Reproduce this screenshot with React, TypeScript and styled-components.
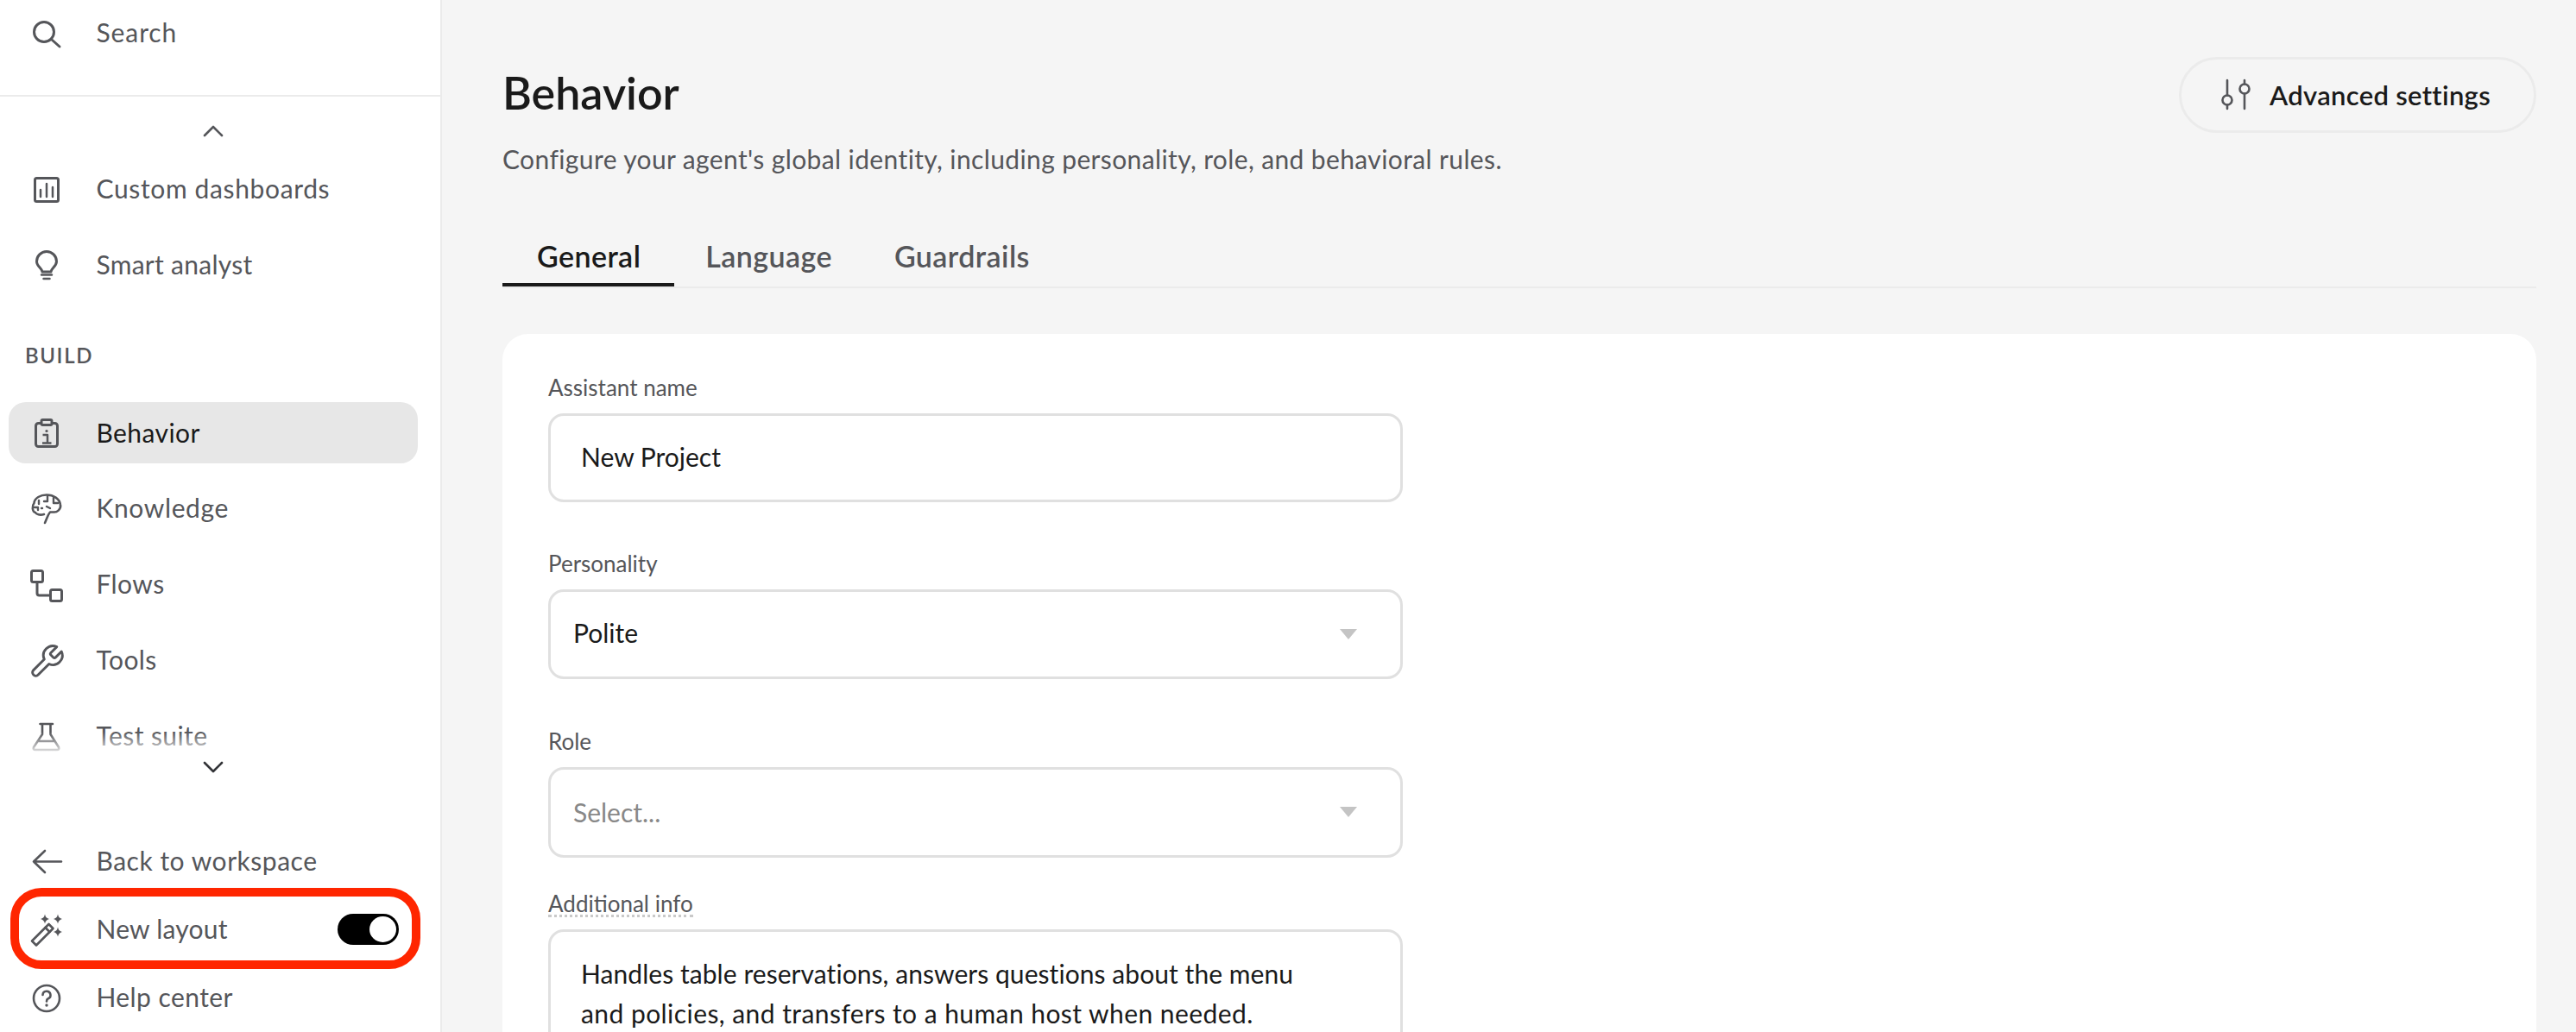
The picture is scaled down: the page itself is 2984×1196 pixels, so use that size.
import React from "react";
import styled, { createGlobalStyle } from "styled-components";

const FONT = `"Lato", "Liberation Sans", sans-serif`;
const INK = "#1a1a1a";
const MUTED = "#55565a";
const LINE = "#ebebeb";
const CANVAS = "#f5f5f5";

const Global = createGlobalStyle`
  html, body, #root { margin: 0; padding: 0; width: 100%; height: 100%; overflow: hidden; }
  body { font-family: ${FONT}; background: ${CANVAS}; }
  * { box-sizing: border-box; }
`;

const Page = styled.div`
  display: flex;
  width: 2984px;
  height: 1196px;
  overflow: hidden;
`;

const Sidebar = styled.aside`
  flex: none;
  width: 512px;
  height: 100%;
  display: flex;
  flex-direction: column;
  background: #fff;
  border-right: 2px solid ${LINE};
`;

const SearchArea = styled.div`
  flex: none;
  height: 112px;
  padding: 2.5px 26px 0 10px;
  border-bottom: 2px solid ${LINE};
`;

const NavArea = styled.nav`
  position: relative;
  flex: 1;
  min-height: 0;
  padding-right: 26px;
  padding-left: 10px;
`;

const Chevron = styled.div`
  height: 71.5px;
  padding-top: 9px;
  display: flex;
  align-items: center;
  justify-content: center;
  color: ${MUTED};
`;

const RowList = styled.div`
  display: flex;
  flex-direction: column;
  gap: 16.75px;
`;

const Row = styled.div<{ $active?: boolean }>`
  position: relative;
  height: 71px;
  display: flex;
  align-items: center;
  gap: 37.5px;
  padding-left: 24px;
  border-radius: 20px;
  font-size: 30px;
  white-space: nowrap;
  color: ${(p) => (p.$active ? INK : MUTED)};
  background: ${(p) => (p.$active ? "#e7e7e7" : "transparent")};
`;

const RowText = styled.span<{ $ls?: number }>`
  position: relative;
  top: -1px;
  letter-spacing: ${(p) => p.$ls ?? 0.42}px;
`;

const IconBox = styled.svg`
  flex: none;
  width: 40px;
  height: 40px;
  overflow: visible;
  fill: none;
  stroke: ${MUTED};
  stroke-width: 3;
  stroke-linecap: round;
  stroke-linejoin: round;
`;

const SectionLabel = styled.div`
  height: 30px;
  margin: 54.75px 0 39px 19px;
  line-height: 30px;
  font-size: 24px;
  font-weight: 600;
  letter-spacing: 1.6px;
  color: ${MUTED};
`;

const BottomFade = styled.div`
  position: absolute;
  left: 10px;
  right: 26px;
  top: 736px;
  height: 48px;
  display: flex;
  align-items: flex-end;
  justify-content: center;
  color: #333438;
  background: linear-gradient(to bottom, rgba(255, 255, 255, 0), #fff 60%);
`;

const Footer = styled.div`
  flex: none;
  display: flex;
  flex-direction: column;
  gap: 8px;
  padding: 0 26px 4.5px 10px;
`;

const Highlight = styled.div`
  position: absolute;
  top: -12.5px;
  bottom: -10.5px;
  left: 2px;
  right: -3px;
  border: 10px solid #ff2600;
  border-radius: 36px;
  pointer-events: none;
`;

const Toggle = styled.div`
  position: relative;
  margin-left: auto;
  margin-right: 22px;
  width: 71px;
  height: 36px;
  border-radius: 18px;
  background: #000;
`;

const Knob = styled.div`
  position: absolute;
  top: 3px;
  right: 3px;
  width: 31px;
  height: 30px;
  border-radius: 50%;
  background: #fff;
`;

const Main = styled.main`
  flex: 1;
  min-width: 0;
  height: 100%;
  display: flex;
  flex-direction: column;
  padding: 66px 46px 0 70px;
  background: ${CANVAS};
`;

const Header = styled.header`
  display: flex;
  align-items: flex-start;
  justify-content: space-between;
`;

const TitleBlock = styled.div`
  padding-top: 11px;
`;

const Title = styled.h1`
  margin: 0;
  height: 60px;
  line-height: 60px;
  font-size: 52px;
  font-weight: 600;
  color: ${INK};
`;

const Subtitle = styled.p`
  margin: 27px 0 0;
  line-height: 40px;
  font-size: 30px;
  letter-spacing: 0.38px;
  color: ${MUTED};
`;

const GhostButton = styled.button`
  height: 88px;
  display: flex;
  align-items: center;
  gap: 19px;
  padding: 0 50px 0 43px;
  border: 3px solid ${LINE};
  border-radius: 44px;
  background: transparent;
  font-family: ${FONT};
  font-size: 31px;
  font-weight: 600;
  letter-spacing: 0.3px;
  color: ${INK};
`;

const TabBar = styled.div`
  display: flex;
  margin-top: 60px;
  border-bottom: 2px solid ${LINE};
`;

const Tab = styled.div<{ $active?: boolean }>`
  height: 68px;
  padding: 0 ${(p) => (p.$active ? 39 : 36)}px 0 ${(p) => (p.$active ? 40 : 36)}px;
  display: flex;
  align-items: center;
  font-size: 34px;
  font-weight: 600;
  letter-spacing: 0.42px;
  color: ${(p) => (p.$active ? INK : MUTED)};
  border-bottom: 4px solid ${(p) => (p.$active ? INK : "transparent")};
`;

const Card = styled.section`
  flex: 1;
  margin-top: 53px;
  padding: 47px 53px 0;
  background: #fff;
  border-radius: 30px 30px 0 0;
`;

const Field = styled.div<{ $gap?: number }>`
  width: 990px;
  margin-bottom: ${(p) => p.$gap ?? 0}px;
`;

const LabelRow = styled.div`
  height: 32px;
  margin-bottom: 13px;
  line-height: 30px;
  font-size: 26px;
  color: ${MUTED};
`;

const DottedLabel = styled.span`
  display: inline-block;
  height: 31px;
  line-height: 30px;
  border-bottom: 3px dotted #c9c9c9;
`;

const InputBox = styled.div<{ $h: number; $pad: number; $muted?: boolean }>`
  height: ${(p) => p.$h}px;
  display: flex;
  align-items: center;
  justify-content: space-between;
  padding: 0 50px ${(p) => (p.$muted ? 2 : 4)}px ${(p) => p.$pad}px;
  border: 3px solid #e0e0e0;
  border-radius: 18px;
  background: #fff;
  font-size: 30px;
  color: ${(p) => (p.$muted ? "#888888" : INK)};
`;

const TextBlock = styled.div`
  height: 220px;
  padding: 25px 35px;
  border: 3px solid #e0e0e0;
  border-radius: 18px;
  font-size: 30px;
  line-height: 46px;
  color: ${INK};
`;

const TextLine = styled.div<{ $ls: number }>`
  letter-spacing: ${(p) => p.$ls}px;
  white-space: nowrap;
`;

const CaretMark = styled.svg<{ $dy: number }>`
  margin-top: ${(p) => p.$dy}px;
`;

const Caret = ({ dy }: { dy: number }) => (
  <CaretMark $dy={dy} width="20" height="12" viewBox="0 0 20 12">
    <path d="M0 0H20L10 12Z" fill="#c4c4c4" />
  </CaretMark>
);

const ChevronIcon = ({ up }: { up?: boolean }) => (
  <svg width="24" height="14" viewBox="0 0 24 14" fill="none" stroke="currentColor" strokeWidth="2.6" strokeLinecap="round" strokeLinejoin="round">
    <path d={up ? "M2 12L12 2L22 12" : "M2 2L12 12L22 2"} />
  </svg>
);

const icons: Record<string, React.ReactNode> = {
  search: (
    <>
      <circle cx="17" cy="19" r="11.5" />
      <path d="M26 28L35 36" />
    </>
  ),
  chart: (
    <>
      <rect x="6.5" y="7.5" width="27" height="27" rx="2" />
      <path d="M13 21V29M20 14V29M27 18V29" strokeWidth="2.5" />
    </>
  ),
  bulb: (
    <>
      <path d="M15 28C15 24 8.5 22 8.5 16A11.5 11.5 0 0 1 31.5 16C31.5 22 25 24 25 28Z" />
      <path d="M14 31.5H26M16.5 36H23.5" strokeWidth="2.5" />
    </>
  ),
  clipboard: (
    <>
      <rect x="7.5" y="8.5" width="25" height="27" rx="3" />
      <rect x="14" y="4.5" width="12" height="6" rx="1.5" fill="#e7e7e7" />
      <path d="M15.5 22H21V31M15 31.5H25.5" strokeWidth="2.5" strokeLinecap="butt" />
      <circle cx="20" cy="17.5" r="1.6" fill={MUTED} stroke="none" />
    </>
  ),
  brain: (
    <>
      <path d="M17 27C12 28.5 8 27 7 25C3 24 3 17 5.5 14C6 8 13 4.5 20 4.5C28 4.5 35 9 36 16C37 21 32 25 28 24.5L24 24.5C21 28 20 33 18 37" strokeWidth="2.6" />
      <path d="M11 11V15M6 19H10V22M21 6V12H17M28 8V14H33M14 20H15M20 18L24 20" strokeWidth="2.4" />
    </>
  ),
  flows: (
    <>
      <rect x="2.5" y="4.5" width="13" height="13" rx="2" />
      <rect x="24.5" y="26.5" width="13" height="13" rx="2" />
      <path d="M9 18V30.5Q9 33 11.5 33H24" />
    </>
  ),
  flask: <path d="M12.5 6H27M15 6V18L5 33Q4 36 7 36H32Q35 36 34 33L24.5 18V6M10 26H29" strokeWidth="2.6" />,
  back: <path d="M37 20.5H5M18 8L5 20.5L18 33" strokeWidth="2.6" />,
  wand: (
    <>
      <path d="M3 33.5L22.5 14L27.5 19L8 38.5Z" strokeWidth="2.6" />
      <path d="M18.5 18L23.5 23" strokeWidth="2.6" />
      <g fill={MUTED} stroke="none">
        <path d="M18 2.5Q18.8 7 23 8Q18.8 9 18 13.5Q17.2 9 13 8Q17.2 7 18 2.5Z" />
        <path d="M33 2.5Q33.8 7 38 8Q33.8 9 33 13.5Q32.2 9 28 8Q32.2 7 33 2.5Z" />
        <path d="M33 17.5Q33.8 22 38 23Q33.8 24 33 28.5Q32.2 24 28 23Q32.2 22 33 17.5Z" />
      </g>
    </>
  ),
  help: (
    <>
      <circle cx="20" cy="21" r="15" strokeWidth="2.6" />
      <path d="M15.5 17A4.5 4.5 0 1 1 21.5 21.5C20.5 22 20 23 20 24.5" strokeWidth="2.6" />
      <circle cx="20" cy="29" r="1.7" fill={MUTED} stroke="none" />
    </>
  ),
  sliders: (
    <>
      <path d="M10 3V20.5M10 31.5V36M30 3V7.5M30 18.5V36" strokeWidth="2.6" />
      <circle cx="10" cy="26" r="5.5" strokeWidth="2.6" />
      <circle cx="30" cy="13" r="5.5" strokeWidth="2.6" />
    </>
  ),
};

const Icon = ({ name }: { name: string }) => <IconBox viewBox="0 0 40 40">{icons[name]}</IconBox>;

const WrenchGlyph = styled(IconBox)`
  stroke-width: 1.6;
`;

const WrenchIcon = () => (
  <WrenchGlyph viewBox="1 0 22 22">
    <path d="M14.7 6.3a1 1 0 0 0 0 1.4l1.6 1.6a1 1 0 0 0 1.4 0l3.77-3.77a6 6 0 0 1-7.94 7.94l-6.91 6.91a2.12 2.12 0 0 1-3-3l6.91-6.91a6 6 0 0 1 7.94-7.94l-3.76 3.76z" />
  </WrenchGlyph>
);

const NavRow = ({ icon, label, active, ls }: { icon: React.ReactNode; label: string; active?: boolean; ls?: number }) => (
  <Row $active={active}>
    {icon}
    <RowText $ls={ls}>{label}</RowText>
  </Row>
);

export default function App() {
  return (
    <Page>
      <Global />
      <Sidebar>
        <SearchArea>
          <NavRow icon={<Icon name="search" />} label="Search" ls={0.9} />
        </SearchArea>
        <NavArea>
          <Chevron>
            <ChevronIcon up />
          </Chevron>
          <RowList>
            <NavRow icon={<Icon name="chart" />} label="Custom dashboards" ls={0.64} />
            <NavRow icon={<Icon name="bulb" />} label="Smart analyst" ls={0.27} />
          </RowList>
          <SectionLabel>BUILD</SectionLabel>
          <RowList>
            <NavRow icon={<Icon name="clipboard" />} label="Behavior" active />
            <NavRow icon={<Icon name="brain" />} label="Knowledge" ls={0.62} />
            <NavRow icon={<Icon name="flows" />} label="Flows" />
            <NavRow icon={<WrenchIcon />} label="Tools" />
            <NavRow icon={<Icon name="flask" />} label="Test suite" />
          </RowList>
          <BottomFade>
            <ChevronIcon />
          </BottomFade>
        </NavArea>
        <Footer>
          <NavRow icon={<Icon name="back" />} label="Back to workspace" ls={0.52} />
          <Row>
            <Icon name="wand" />
            <RowText $ls={0.22}>New layout</RowText>
            <Toggle>
              <Knob />
            </Toggle>
            <Highlight />
          </Row>
          <NavRow icon={<Icon name="help" />} label="Help center" />
        </Footer>
      </Sidebar>
      <Main>
        <Header>
          <TitleBlock>
            <Title>Behavior</Title>
            <Subtitle>Configure your agent's global identity, including personality, role, and behavioral rules.</Subtitle>
          </TitleBlock>
          <GhostButton>
            <Icon name="sliders" />
            Advanced settings
          </GhostButton>
        </Header>
        <TabBar>
          <Tab $active>General</Tab>
          <Tab>Language</Tab>
          <Tab>Guardrails</Tab>
        </TabBar>
        <Card>
          <Field $gap={56}>
            <LabelRow>Assistant name</LabelRow>
            <InputBox $h={103} $pad={35}>New Project</InputBox>
          </Field>
          <Field $gap={57}>
            <LabelRow>Personality</LabelRow>
            <InputBox $h={104} $pad={26}>
              Polite
              <Caret dy={4} />
            </InputBox>
          </Field>
          <Field $gap={38}>
            <LabelRow>Role</LabelRow>
            <InputBox $h={105} $pad={26} $muted>
              Select...
              <Caret dy={0} />
            </InputBox>
          </Field>
          <Field>
            <LabelRow>
              <DottedLabel>Additional info</DottedLabel>
            </LabelRow>
            <TextBlock>
              <TextLine $ls={0.06}>Handles table reservations, answers questions about the menu</TextLine>
              <TextLine $ls={0.44}>and policies, and transfers to a human host when needed.</TextLine>
            </TextBlock>
          </Field>
        </Card>
      </Main>
    </Page>
  );
}
